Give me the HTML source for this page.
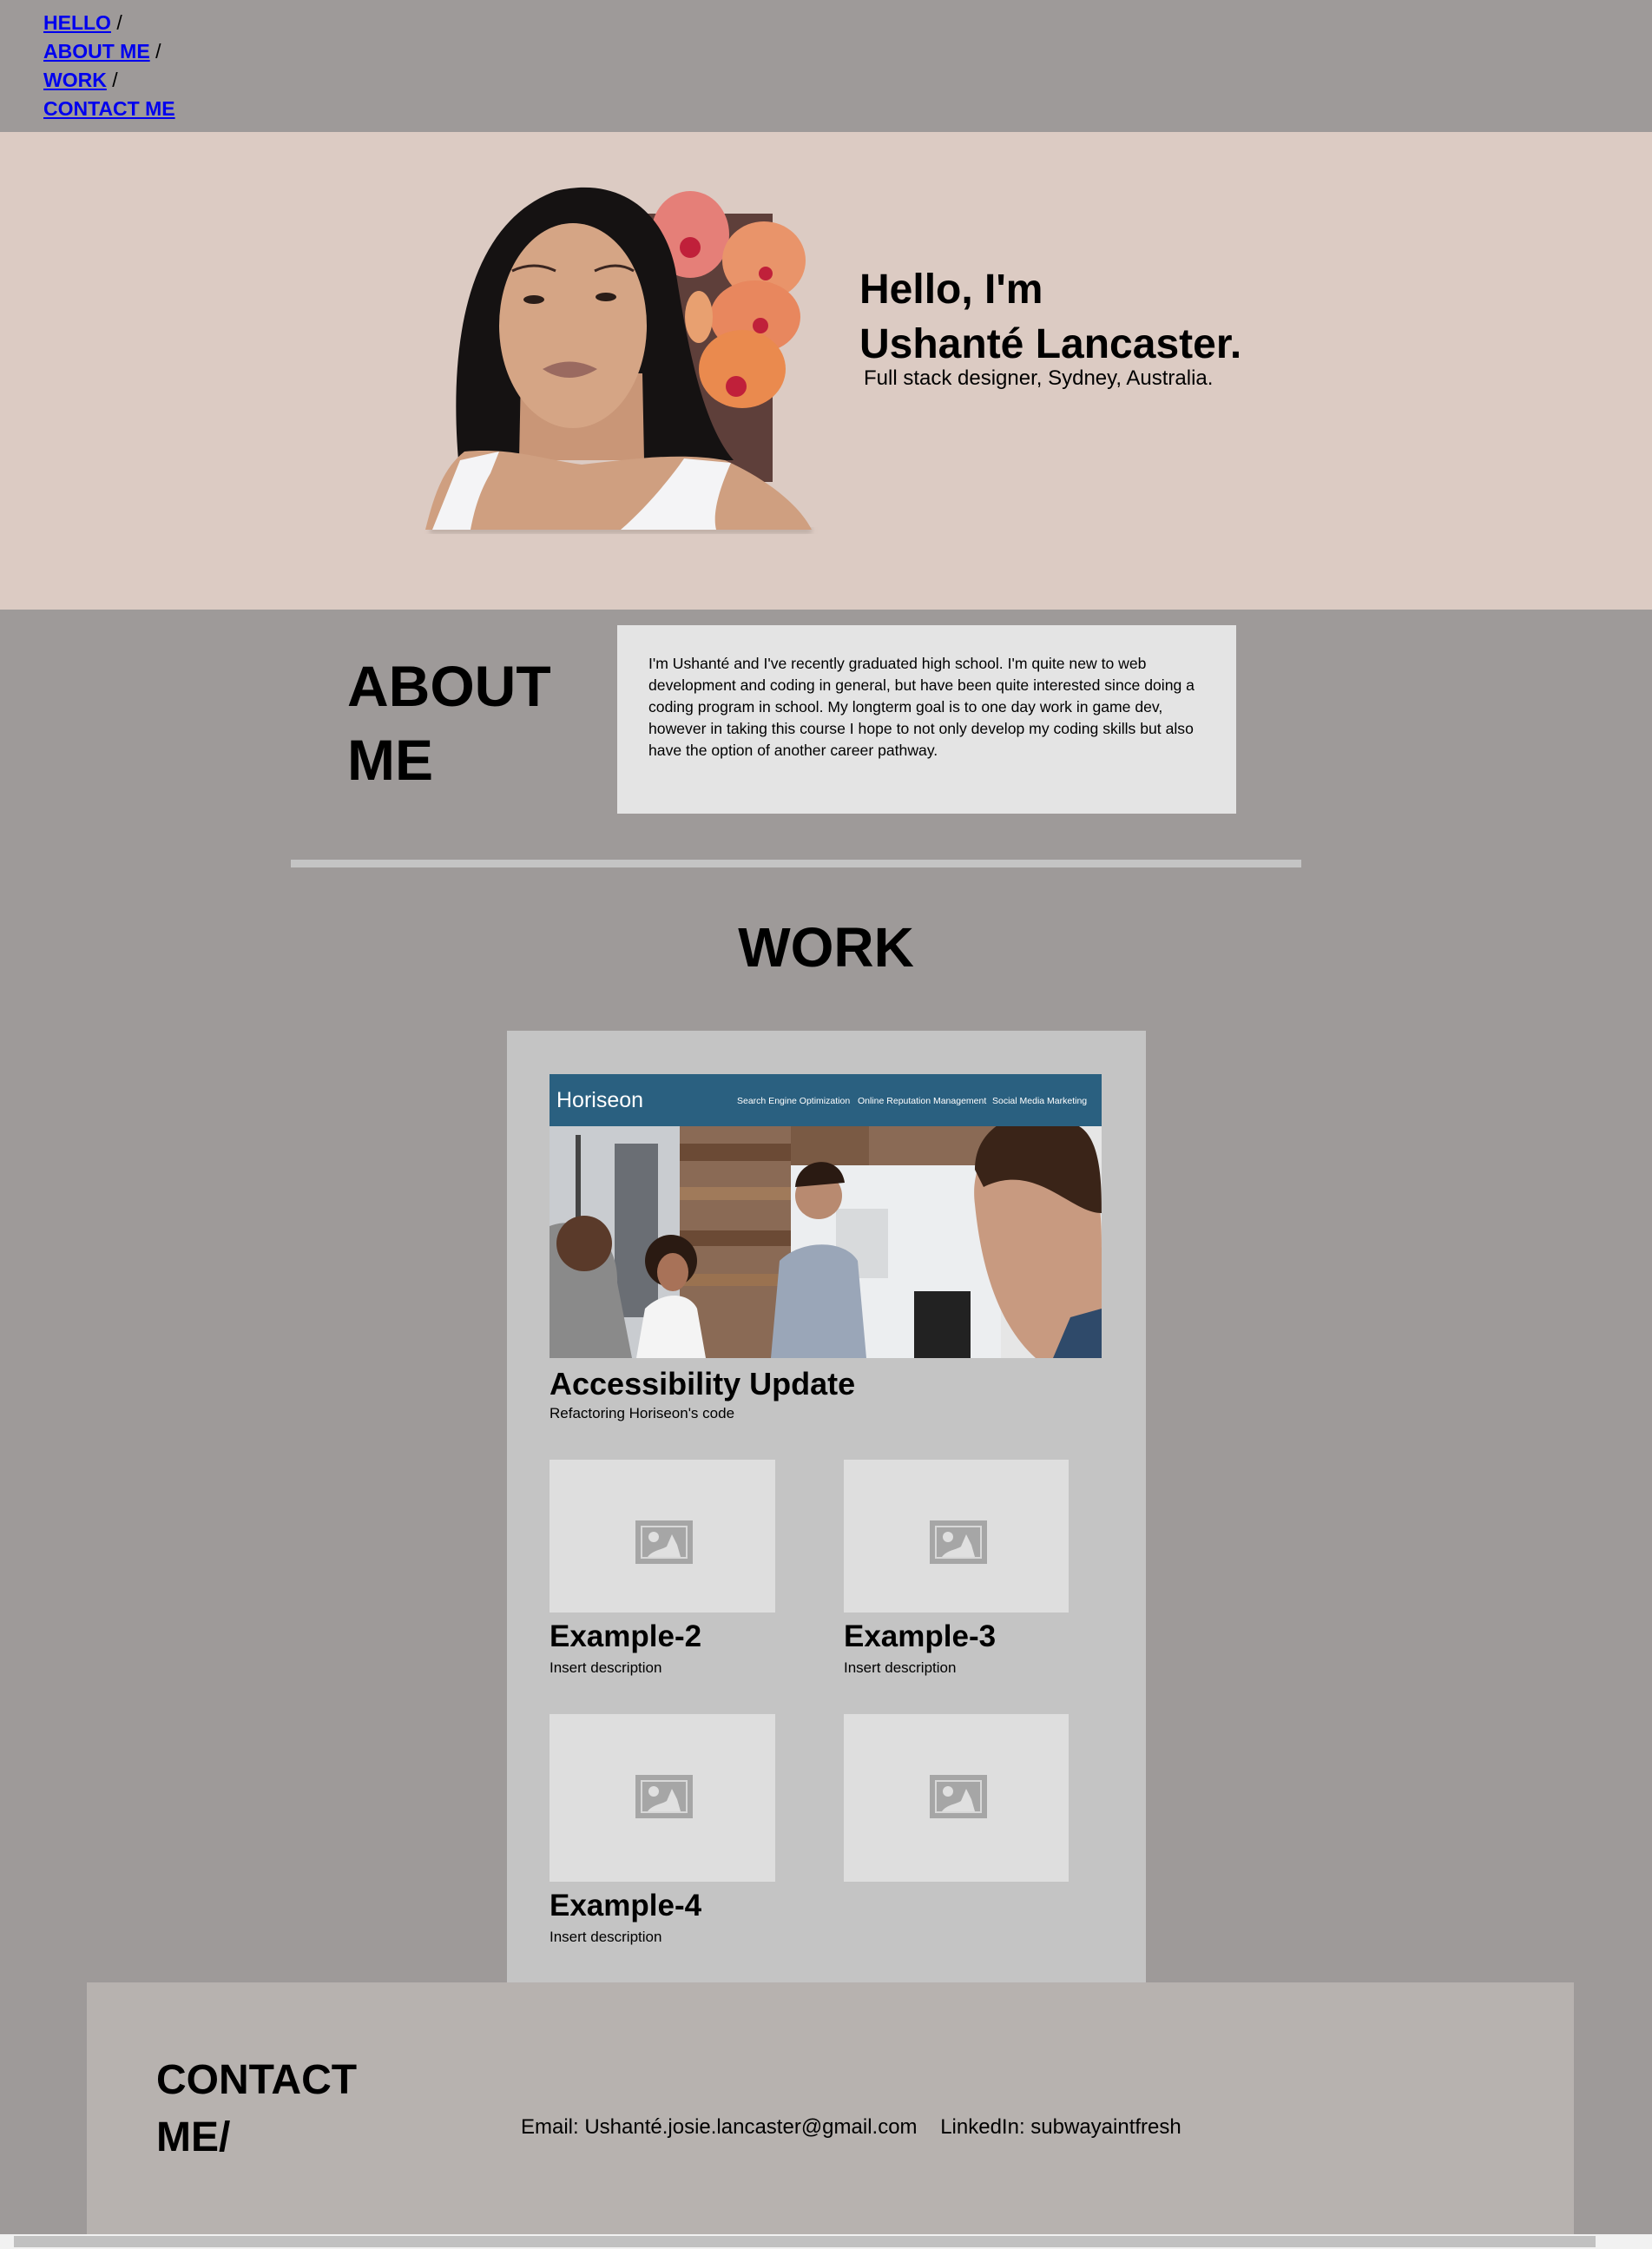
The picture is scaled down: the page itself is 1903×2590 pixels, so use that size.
<!DOCTYPE html>
<html><head><meta charset="utf-8"><style>
*{margin:0;padding:0;box-sizing:border-box}
html,body{width:1903px;height:2590px;overflow:hidden;background:#9e9a99;font-family:"Liberation Sans",Arial,sans-serif;color:#000}
.abs{position:absolute}
nav{position:absolute;left:0;top:0;width:1903px;height:152px;background:#9e9a99}
nav div{position:absolute;left:50px;font-size:23px;line-height:28px;font-weight:bold}
nav a{color:#0000ee;text-decoration:underline}
nav span{font-weight:normal}
.hero{position:absolute;left:0;top:152px;width:1903px;height:550px;background:#dccbc3}
.t{position:absolute;white-space:nowrap}
.card{position:absolute;background:#dedede}
.h3{font-size:35px;font-weight:bold}
.d{font-size:17px}
</style></head><body>
<nav>
<div style="top:12px"><a>HELLO</a> <span>/</span></div>
<div style="top:45px"><a>ABOUT ME</a> <span>/</span></div>
<div style="top:78px"><a>WORK</a> <span>/</span></div>
<div style="top:111px"><a>CONTACT ME</a></div>
</nav>
<div class="hero"></div>
<svg class="abs" style="left:480px;top:200px" width="470" height="420" viewBox="0 0 470 420">
<defs><filter id="sh"><feGaussianBlur stdDeviation="3"/></filter></defs>
<rect x="15" y="408" width="440" height="6" fill="#b8a8a0" filter="url(#sh)"/>
<rect x="257" y="46" width="153" height="309" fill="#5e3f3a"/>
<g fill="#e8875e">
<ellipse cx="315" cy="70" rx="45" ry="50" fill="#e57f78"/>
<ellipse cx="400" cy="100" rx="48" ry="45" fill="#e9946a"/>
<ellipse cx="390" cy="165" rx="52" ry="42"/>
<ellipse cx="375" cy="225" rx="50" ry="45" fill="#ea8a4e"/>
<ellipse cx="325" cy="165" rx="16" ry="30" fill="#e8a070"/>
</g>
<g fill="#c0203a"><circle cx="315" cy="85" r="12"/><circle cx="402" cy="115" r="8"/><circle cx="396" cy="175" r="9"/><circle cx="368" cy="245" r="12"/></g>
<path d="M48,330 C38,210 52,60 160,20 C235,2 285,45 298,110 C312,200 330,290 365,330 Z" fill="#151212"/>
<path d="M120,230 L260,230 L262,330 L118,330 Z" fill="#c99677"/>
<ellipse cx="180" cy="175" rx="85" ry="118" fill="#d5a585"/>
<path d="M55,320 C110,315 150,330 190,335 C240,330 300,320 355,330 C400,350 440,380 455,410 L10,410 C20,370 30,340 55,320 Z" fill="#cf9f80"/>
<path d="M18,410 L50,330 L95,320 L85,345 C70,370 65,395 62,410 Z" fill="#f4f4f6"/>
<path d="M235,410 C270,380 300,340 308,328 L362,333 C350,360 340,390 345,410 Z" fill="#f4f4f6"/>
<path d="M110,112 Q135,100 160,112 M205,112 Q230,100 250,112" stroke="#3a2520" stroke-width="3" fill="none"/>
<ellipse cx="135" cy="145" rx="12" ry="5" fill="#2a1d18"/><ellipse cx="218" cy="142" rx="12" ry="5" fill="#2a1d18"/>
<path d="M145,225 Q175,208 208,225 Q175,245 145,225 Z" fill="#9a6a60"/>
</svg>
<div class="t" style="left:990px;top:302px;font-size:48px;font-weight:bold;line-height:63px">Hello, I'm<br>Ushanté Lancaster.</div>
<div class="t" style="left:995px;top:422px;font-size:24px">Full stack designer, Sydney, Australia.</div>

<div class="t" style="left:400px;top:748px;font-size:66px;font-weight:bold;line-height:85px">ABOUT<br>ME</div>
<div class="abs" style="left:711px;top:720px;width:713px;height:217px;background:#e4e4e4;padding:32px 30px 0 36px;font-size:17.6px;line-height:25px">I'm Ushanté and I've recently graduated high school. I'm quite new to web development and coding in general, but have been quite interested since doing a coding program in school. My longterm goal is to one day work in game dev, however in taking this course I hope to not only develop my coding skills but also have the option of another career pathway.</div>
<div class="abs" style="left:335px;top:990px;width:1164px;height:9px;background:#c4c4c4"></div>
<div class="t" style="left:0;width:1903px;text-align:center;top:1054px;font-size:64px;font-weight:bold">WORK</div>

<div class="abs" style="left:584px;top:1187px;width:736px;height:1096px;background:#c4c4c4"></div>
<svg class="abs" style="left:633px;top:1237px" width="636" height="327" viewBox="0 0 636 327">
<rect width="636" height="327" fill="#8a6a55"/>
<rect width="150" height="327" y="60" fill="#c9ccd0"/>
<rect x="30" y="70" width="6" height="200" fill="#444"/><rect x="75" y="80" width="50" height="200" fill="#6a6e74"/>
<g fill="#6b4a35"><rect x="150" y="80" width="130" height="20"/><rect x="150" y="130" width="130" height="15" fill="#a07a5a"/><rect x="150" y="180" width="130" height="18"/><rect x="150" y="230" width="130" height="14" fill="#9a7250"/></g>
<rect x="278" y="60" width="90" height="45" fill="#7a5a44"/>
<rect x="278" y="105" width="250" height="222" fill="#eceef0"/>
<rect x="330" y="155" width="60" height="80" fill="#d8dadc"/>
<rect x="520" y="60" width="116" height="267" fill="#e6e6e6"/>
<path d="M0,175 C40,160 80,190 78,240 L95,327 L0,327 Z" fill="#8a8a8a"/>
<circle cx="40" cy="195" r="32" fill="#5a3a2a"/>
<path d="M100,327 L110,270 C130,250 160,250 170,270 L180,327 Z" fill="#f4f4f4"/>
<circle cx="140" cy="215" r="30" fill="#2a1a12"/><ellipse cx="142" cy="228" rx="18" ry="22" fill="#a87258"/>
<path d="M255,327 L265,215 C290,190 340,190 355,215 L365,327 Z" fill="#9aa6b8"/>
<circle cx="310" cy="140" r="27" fill="#b88a70"/><path d="M283,130 C285,95 335,90 340,125 Z" fill="#2a1a12"/>
<rect x="420" y="250" width="65" height="77" fill="#222"/>
<path d="M490,150 C480,70 560,40 600,70 C636,90 636,180 636,200 L636,327 L560,327 C530,300 500,250 490,150 Z" fill="#c89a80"/>
<path d="M490,110 C490,50 560,30 610,60 C636,75 636,130 636,160 C600,160 560,100 500,130 Z" fill="#3a2418"/>
<path d="M580,327 L600,280 L636,270 L636,327 Z" fill="#2f4a6a"/>
<rect width="636" height="60" fill="#2a6080"/>
<text x="8" y="38" font-family="Liberation Sans,sans-serif" font-size="25" fill="#fff">Horiseon</text>
<text x="216" y="34" font-family="Liberation Sans,sans-serif" font-size="10.5" fill="#fff">Search Engine Optimization</text>
<text x="355" y="34" font-family="Liberation Sans,sans-serif" font-size="10.5" fill="#fff">Online Reputation Management</text>
<text x="510" y="34" font-family="Liberation Sans,sans-serif" font-size="10.5" fill="#fff">Social Media Marketing</text>
</svg>
<div class="t h3" style="left:633px;top:1573px;font-size:36px">Accessibility Update</div>
<div class="t d" style="left:633px;top:1618px">Refactoring Horiseon's code</div>

<div class="card" style="left:633px;top:1681px;width:260px;height:176px"></div>
<div class="card" style="left:972px;top:1681px;width:259px;height:176px"></div>
<div class="card" style="left:633px;top:1974px;width:260px;height:193px"></div>
<div class="card" style="left:972px;top:1974px;width:259px;height:193px"></div>
<svg class="abs" style="left:732px;top:1751px" width="66" height="50"><use href="#icon"/></svg>
<svg class="abs" style="left:1071px;top:1751px" width="66" height="50"><use href="#icon"/></svg>
<svg class="abs" style="left:732px;top:2044px" width="66" height="50"><use href="#icon"/></svg>
<svg class="abs" style="left:1071px;top:2044px" width="66" height="50"><use href="#icon"/></svg>
<svg width="0" height="0" style="position:absolute"><defs><g id="icon">
<rect width="66" height="50" fill="#a6a6a6"/><rect x="6" y="6" width="54" height="38" fill="#d8d8d8"/><rect x="8" y="8" width="50" height="34" fill="#a6a6a6"/>
<circle cx="21" cy="19" r="6" fill="#e0e0e0"/>
<path d="M14,42 C20,34 30,34 36,30 L42,16 L48,28 L52,42 Z" fill="#e0e0e0"/></g></defs></svg>
<div class="t h3" style="left:633px;top:1865px">Example-2</div>
<div class="t d" style="left:633px;top:1911px">Insert description</div>
<div class="t h3" style="left:972px;top:1865px">Example-3</div>
<div class="t d" style="left:972px;top:1911px">Insert description</div>
<div class="t h3" style="left:633px;top:2175px">Example-4</div>
<div class="t d" style="left:633px;top:2221px">Insert description</div>

<div class="abs" style="left:100px;top:2283px;width:1713px;height:290px;background:#b7b2af"></div>
<div class="t" style="left:180px;top:2363px;font-size:48px;font-weight:bold;line-height:66px">CONTACT<br>ME/</div>
<div class="t" style="left:600px;top:2436px;font-size:24px">Email: Ushanté.josie.lancaster@gmail.com&nbsp;&nbsp;&nbsp; LinkedIn: subwayaintfresh</div>

<div class="abs" style="left:0;top:2573px;width:1903px;height:17px;background:#f1f1f1"></div>
<div class="abs" style="left:16px;top:2575px;width:1822px;height:13px;background:#c1c1c1"></div>
</body></html>
